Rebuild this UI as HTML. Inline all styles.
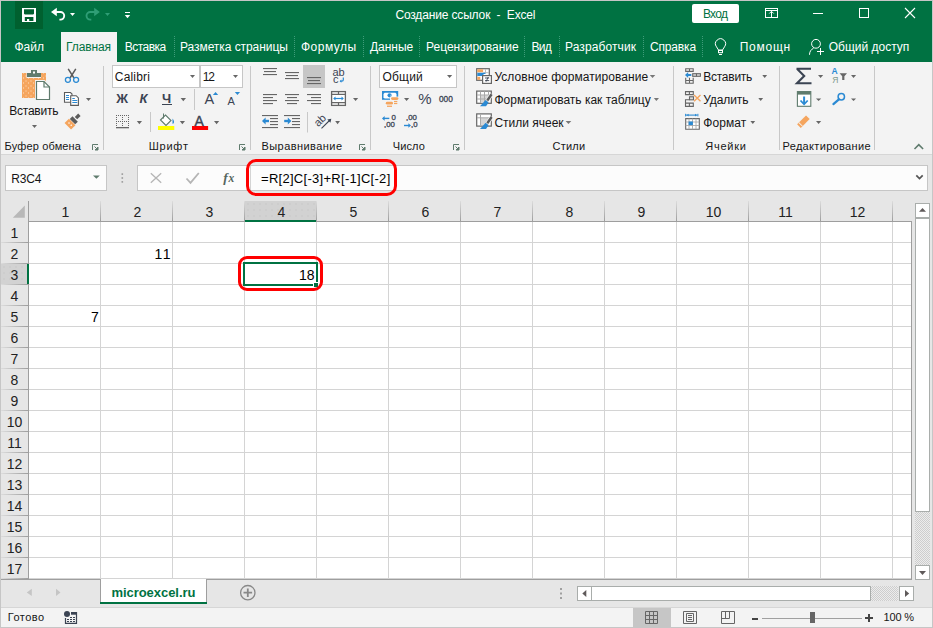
<!DOCTYPE html>
<html><head><meta charset="utf-8">
<style>
*{margin:0;padding:0;box-sizing:border-box}
html,body{width:933px;height:628px;overflow:hidden;background:#fff}
body{position:relative;font-family:"Liberation Sans",sans-serif;font-size:12px;color:#262626}
.a{position:absolute}
.t{position:absolute;white-space:nowrap}
svg{position:absolute;overflow:visible}
</style></head><body>
<div class="a" style="left:0px;top:0px;width:933px;height:628px;background:#c6c6c6;"></div>
<div class="a" style="left:1px;top:1px;width:931px;height:61px;background:#007242;"></div>
<div class="a" style="left:15px;top:1px;width:28px;height:28px;background:#00602f;"></div>
<div class="a" style="left:1px;top:62px;width:931px;height:92px;background:#f3f3f3;"></div>
<div class="a" style="left:1px;top:154px;width:931px;height:1px;background:#d6d6d6;"></div>
<div class="a" style="left:61px;top:32px;width:56px;height:30px;background:#f3f3f3;"></div>
<div class="a" style="left:1px;top:155px;width:931px;height:424px;background:#e6e6e6;"></div>
<div class="a" style="left:1px;top:579px;width:931px;height:28px;background:#e6e6e6;"></div>
<div class="a" style="left:1px;top:607px;width:931px;height:20px;background:#f3f3f3;"></div>
<div class="a" style="left:1px;top:607px;width:931px;height:1px;background:#d6d6d6;"></div>
<div class="a" style="left:692px;top:4px;width:47px;height:19px;background:#fff;border-radius:2px"></div>
<div class="a" style="left:174px;top:36px;width:1px;height:21px;background:transparent;border-left:1px dotted #3f9c7a"></div>
<div class="a" style="left:294px;top:36px;width:1px;height:21px;background:transparent;border-left:1px dotted #3f9c7a"></div>
<div class="a" style="left:363px;top:36px;width:1px;height:21px;background:transparent;border-left:1px dotted #3f9c7a"></div>
<div class="a" style="left:419px;top:36px;width:1px;height:21px;background:transparent;border-left:1px dotted #3f9c7a"></div>
<div class="a" style="left:524px;top:36px;width:1px;height:21px;background:transparent;border-left:1px dotted #3f9c7a"></div>
<div class="a" style="left:559px;top:36px;width:1px;height:21px;background:transparent;border-left:1px dotted #3f9c7a"></div>
<div class="a" style="left:643px;top:36px;width:1px;height:21px;background:transparent;border-left:1px dotted #3f9c7a"></div>
<div class="a" style="left:702px;top:36px;width:1px;height:21px;background:transparent;border-left:1px dotted #3f9c7a"></div>
<div class="a" style="left:103px;top:66px;width:1px;height:84px;background:#c8c8c8;"></div>
<div class="a" style="left:250px;top:66px;width:1px;height:84px;background:#c8c8c8;"></div>
<div class="a" style="left:370px;top:66px;width:1px;height:84px;background:#c8c8c8;"></div>
<div class="a" style="left:464px;top:66px;width:1px;height:84px;background:#c8c8c8;"></div>
<div class="a" style="left:673px;top:66px;width:1px;height:84px;background:#c8c8c8;"></div>
<div class="a" style="left:779px;top:66px;width:1px;height:84px;background:#c8c8c8;"></div>
<div class="a" style="left:874px;top:66px;width:1px;height:84px;background:#c8c8c8;"></div>
<div class="a" style="left:112px;top:65px;width:88px;height:23px;background:#fff;border:1px solid #c6c6c6"></div>
<div class="a" style="left:200px;top:65px;width:43px;height:23px;background:#fff;border:1px solid #c6c6c6"></div>
<div class="a" style="left:379px;top:65px;width:78px;height:23px;background:#fff;border:1px solid #c6c6c6"></div>
<div class="a" style="left:5px;top:165px;width:102px;height:26px;background:#fcfcfc;border:1px solid #c6c6c6"></div>
<div class="a" style="left:137px;top:165px;width:791px;height:26px;background:#fcfcfc;border:1px solid #c6c6c6"></div>
<div class="a" style="left:250px;top:166px;width:1px;height:24px;background:#d4d4d4;"></div>
<div class="a" style="left:29px;top:222px;width:882px;height:357px;background:#fff;"></div>
<div class="a" style="left:100px;top:222px;width:1px;height:357px;background:#d4d4d4;"></div>
<div class="a" style="left:172px;top:222px;width:1px;height:357px;background:#d4d4d4;"></div>
<div class="a" style="left:244px;top:222px;width:1px;height:357px;background:#d4d4d4;"></div>
<div class="a" style="left:316px;top:222px;width:1px;height:357px;background:#d4d4d4;"></div>
<div class="a" style="left:388px;top:222px;width:1px;height:357px;background:#d4d4d4;"></div>
<div class="a" style="left:460px;top:222px;width:1px;height:357px;background:#d4d4d4;"></div>
<div class="a" style="left:532px;top:222px;width:1px;height:357px;background:#d4d4d4;"></div>
<div class="a" style="left:604px;top:222px;width:1px;height:357px;background:#d4d4d4;"></div>
<div class="a" style="left:676px;top:222px;width:1px;height:357px;background:#d4d4d4;"></div>
<div class="a" style="left:748px;top:222px;width:1px;height:357px;background:#d4d4d4;"></div>
<div class="a" style="left:820px;top:222px;width:1px;height:357px;background:#d4d4d4;"></div>
<div class="a" style="left:892px;top:222px;width:1px;height:357px;background:#d4d4d4;"></div>
<div class="a" style="left:29px;top:242px;width:882px;height:1px;background:#d4d4d4;"></div>
<div class="a" style="left:29px;top:263px;width:882px;height:1px;background:#d4d4d4;"></div>
<div class="a" style="left:29px;top:284px;width:882px;height:1px;background:#d4d4d4;"></div>
<div class="a" style="left:29px;top:305px;width:882px;height:1px;background:#d4d4d4;"></div>
<div class="a" style="left:29px;top:326px;width:882px;height:1px;background:#d4d4d4;"></div>
<div class="a" style="left:29px;top:347px;width:882px;height:1px;background:#d4d4d4;"></div>
<div class="a" style="left:29px;top:368px;width:882px;height:1px;background:#d4d4d4;"></div>
<div class="a" style="left:29px;top:389px;width:882px;height:1px;background:#d4d4d4;"></div>
<div class="a" style="left:29px;top:410px;width:882px;height:1px;background:#d4d4d4;"></div>
<div class="a" style="left:29px;top:431px;width:882px;height:1px;background:#d4d4d4;"></div>
<div class="a" style="left:29px;top:452px;width:882px;height:1px;background:#d4d4d4;"></div>
<div class="a" style="left:29px;top:473px;width:882px;height:1px;background:#d4d4d4;"></div>
<div class="a" style="left:29px;top:494px;width:882px;height:1px;background:#d4d4d4;"></div>
<div class="a" style="left:29px;top:515px;width:882px;height:1px;background:#d4d4d4;"></div>
<div class="a" style="left:29px;top:536px;width:882px;height:1px;background:#d4d4d4;"></div>
<div class="a" style="left:29px;top:557px;width:882px;height:1px;background:#d4d4d4;"></div>
<div class="a" style="left:29px;top:578px;width:882px;height:1px;background:#d4d4d4;"></div>
<div class="a" style="left:1px;top:201px;width:931px;height:20px;background:#e6e6e6;"></div>
<div class="a" style="left:245px;top:201px;width:71px;height:20px;background:#d2d2d2;background-image:radial-gradient(#c6c6c6 0.6px,transparent 0.8px);background-size:6px 6px"></div>
<div class="a" style="left:1px;top:264px;width:27px;height:20px;background:#d2d2d2;background-image:radial-gradient(#c6c6c6 0.6px,transparent 0.8px);background-size:6px 6px"></div>
<div class="a" style="left:28px;top:201px;width:1px;height:20px;background:linear-gradient(#dcdcdc,#9e9e9e);"></div>
<div class="a" style="left:100px;top:201px;width:1px;height:20px;background:linear-gradient(#dcdcdc,#9e9e9e);"></div>
<div class="a" style="left:172px;top:201px;width:1px;height:20px;background:linear-gradient(#dcdcdc,#9e9e9e);"></div>
<div class="a" style="left:244px;top:201px;width:1px;height:20px;background:linear-gradient(#dcdcdc,#9e9e9e);"></div>
<div class="a" style="left:316px;top:201px;width:1px;height:20px;background:linear-gradient(#dcdcdc,#9e9e9e);"></div>
<div class="a" style="left:388px;top:201px;width:1px;height:20px;background:linear-gradient(#dcdcdc,#9e9e9e);"></div>
<div class="a" style="left:460px;top:201px;width:1px;height:20px;background:linear-gradient(#dcdcdc,#9e9e9e);"></div>
<div class="a" style="left:532px;top:201px;width:1px;height:20px;background:linear-gradient(#dcdcdc,#9e9e9e);"></div>
<div class="a" style="left:604px;top:201px;width:1px;height:20px;background:linear-gradient(#dcdcdc,#9e9e9e);"></div>
<div class="a" style="left:676px;top:201px;width:1px;height:20px;background:linear-gradient(#dcdcdc,#9e9e9e);"></div>
<div class="a" style="left:748px;top:201px;width:1px;height:20px;background:linear-gradient(#dcdcdc,#9e9e9e);"></div>
<div class="a" style="left:820px;top:201px;width:1px;height:20px;background:linear-gradient(#dcdcdc,#9e9e9e);"></div>
<div class="a" style="left:892px;top:201px;width:1px;height:20px;background:linear-gradient(#dcdcdc,#9e9e9e);"></div>
<div class="a" style="left:28px;top:221px;width:883px;height:1px;background:#9e9e9e;"></div>
<div class="a" style="left:28px;top:201px;width:1px;height:378px;background:#9e9e9e;"></div>
<div class="a" style="left:245px;top:220px;width:71px;height:2px;background:#007242;"></div>
<div class="a" style="left:27px;top:264px;width:2px;height:20px;background:#007242;"></div>
<div class="a" style="left:911px;top:221px;width:1px;height:358px;background:#9e9e9e;"></div>
<div class="a" style="left:1px;top:579px;width:911px;height:1px;background:#9e9e9e;"></div>
<div class="a" style="left:1px;top:242px;width:27px;height:1px;background:linear-gradient(90deg,#dcdcdc,#9e9e9e);"></div>
<div class="a" style="left:1px;top:263px;width:27px;height:1px;background:linear-gradient(90deg,#dcdcdc,#9e9e9e);"></div>
<div class="a" style="left:1px;top:284px;width:27px;height:1px;background:linear-gradient(90deg,#dcdcdc,#9e9e9e);"></div>
<div class="a" style="left:1px;top:305px;width:27px;height:1px;background:linear-gradient(90deg,#dcdcdc,#9e9e9e);"></div>
<div class="a" style="left:1px;top:326px;width:27px;height:1px;background:linear-gradient(90deg,#dcdcdc,#9e9e9e);"></div>
<div class="a" style="left:1px;top:347px;width:27px;height:1px;background:linear-gradient(90deg,#dcdcdc,#9e9e9e);"></div>
<div class="a" style="left:1px;top:368px;width:27px;height:1px;background:linear-gradient(90deg,#dcdcdc,#9e9e9e);"></div>
<div class="a" style="left:1px;top:389px;width:27px;height:1px;background:linear-gradient(90deg,#dcdcdc,#9e9e9e);"></div>
<div class="a" style="left:1px;top:410px;width:27px;height:1px;background:linear-gradient(90deg,#dcdcdc,#9e9e9e);"></div>
<div class="a" style="left:1px;top:431px;width:27px;height:1px;background:linear-gradient(90deg,#dcdcdc,#9e9e9e);"></div>
<div class="a" style="left:1px;top:452px;width:27px;height:1px;background:linear-gradient(90deg,#dcdcdc,#9e9e9e);"></div>
<div class="a" style="left:1px;top:473px;width:27px;height:1px;background:linear-gradient(90deg,#dcdcdc,#9e9e9e);"></div>
<div class="a" style="left:1px;top:494px;width:27px;height:1px;background:linear-gradient(90deg,#dcdcdc,#9e9e9e);"></div>
<div class="a" style="left:1px;top:515px;width:27px;height:1px;background:linear-gradient(90deg,#dcdcdc,#9e9e9e);"></div>
<div class="a" style="left:1px;top:536px;width:27px;height:1px;background:linear-gradient(90deg,#dcdcdc,#9e9e9e);"></div>
<div class="a" style="left:1px;top:557px;width:27px;height:1px;background:linear-gradient(90deg,#dcdcdc,#9e9e9e);"></div>
<div class="a" style="left:1px;top:578px;width:27px;height:1px;background:linear-gradient(90deg,#dcdcdc,#9e9e9e);"></div>
<div class="a" style="left:100px;top:579px;width:107px;height:24px;background:#fff;border-left:1px solid #9e9e9e;border-right:1px solid #9e9e9e"></div>
<div class="a" style="left:100px;top:602px;width:107px;height:2px;background:#007242;"></div>
<div class="a" style="left:577px;top:586px;width:15px;height:15px;background:#fff;border:1px solid #a9adab"></div>
<div class="a" style="left:591px;top:586px;width:280px;height:15px;background:#fff;border:1px solid #a9adab"></div>
<div class="a" style="left:871px;top:586px;width:27px;height:15px;background:#dcdcdc;background-image:repeating-conic-gradient(#cdcdcd 0 25%,#ececec 0 50%);background-size:2px 2px"></div>
<div class="a" style="left:899px;top:586px;width:15px;height:15px;background:#fff;border:1px solid #a9adab"></div>
<div class="a" style="left:915px;top:203px;width:15px;height:15px;background:#fff;border:1px solid #a9adab"></div>
<div class="a" style="left:915px;top:218px;width:15px;height:294px;background:#fff;border:1px solid #a9adab"></div>
<div class="a" style="left:915px;top:512px;width:15px;height:53px;background:#dcdcdc;background-image:repeating-conic-gradient(#cdcdcd 0 25%,#ececec 0 50%);background-size:2px 2px"></div>
<div class="a" style="left:915px;top:565px;width:15px;height:15px;background:#fff;border:1px solid #a9adab"></div>
<div class="a" style="left:633px;top:608px;width:38px;height:19px;background:#c6c6c6;"></div>
<div class="a" style="left:762px;top:618px;width:100px;height:1px;background:#a0a0a0;"></div>
<div class="a" style="left:810px;top:612px;width:5px;height:11px;background:#666;"></div>
<div class="a" style="left:752px;top:618px;width:6px;height:2px;background:#444;"></div>
<div class="a" style="left:865px;top:617px;width:8px;height:1.6px;background:#444;"></div>
<div class="a" style="left:868.2px;top:614px;width:1.6px;height:8px;background:#444;"></div>
<div class="t" style="left:395.40px;top:8px;font-size:12px;line-height:15px;font-weight:normal;color:#ffffff;letter-spacing:-0.154px;">Создание ссылок&nbsp; -&nbsp; Excel</div>
<div class="t" style="left:702.90px;top:7px;font-size:12px;line-height:15px;font-weight:normal;color:#007242;letter-spacing:-0.667px;">Вход</div>
<div class="t" style="left:14.40px;top:40px;font-size:12px;line-height:15px;font-weight:normal;color:#ffffff;letter-spacing:0.000px;">Файл</div>
<div class="t" style="left:66.00px;top:40px;font-size:12px;line-height:15px;font-weight:normal;color:#007242;letter-spacing:-0.100px;">Главная</div>
<div class="t" style="left:124.80px;top:40px;font-size:12px;line-height:15px;font-weight:normal;color:#ffffff;letter-spacing:-0.533px;">Вставка</div>
<div class="t" style="left:180.00px;top:40px;font-size:12px;line-height:15px;font-weight:normal;color:#ffffff;letter-spacing:-0.062px;">Разметка страницы</div>
<div class="t" style="left:301.00px;top:40px;font-size:12px;line-height:15px;font-weight:normal;color:#ffffff;letter-spacing:0.500px;">Формулы</div>
<div class="t" style="left:370.00px;top:40px;font-size:12px;line-height:15px;font-weight:normal;color:#ffffff;letter-spacing:-0.040px;">Данные</div>
<div class="t" style="left:426.00px;top:40px;font-size:12px;line-height:15px;font-weight:normal;color:#ffffff;letter-spacing:0.000px;">Рецензирование</div>
<div class="t" style="left:531.50px;top:40px;font-size:12px;line-height:15px;font-weight:normal;color:#ffffff;letter-spacing:-0.750px;">Вид</div>
<div class="t" style="left:565.00px;top:40px;font-size:12px;line-height:15px;font-weight:normal;color:#ffffff;letter-spacing:0.100px;">Разработчик</div>
<div class="t" style="left:650.00px;top:40px;font-size:12px;line-height:15px;font-weight:normal;color:#ffffff;letter-spacing:-0.167px;">Справка</div>
<div class="t" style="left:739.70px;top:40px;font-size:12px;line-height:15px;font-weight:normal;color:#ffffff;letter-spacing:0.760px;">Помощн</div>
<div class="t" style="left:828.70px;top:40px;font-size:12px;line-height:15px;font-weight:normal;color:#ffffff;letter-spacing:0.000px;">Общий доступ</div>
<div class="t" style="left:9.30px;top:104px;font-size:12px;line-height:15px;font-weight:normal;color:#161616;letter-spacing:-0.243px;">Вставить</div>
<div class="t" style="left:4.60px;top:139px;font-size:11px;line-height:14px;font-weight:normal;color:#161616;letter-spacing:0.145px;">Буфер обмена</div>
<div class="t" style="left:148.70px;top:139px;font-size:11px;line-height:14px;font-weight:normal;color:#161616;letter-spacing:0.775px;">Шрифт</div>
<div class="t" style="left:261.50px;top:139px;font-size:11px;line-height:14px;font-weight:normal;color:#161616;letter-spacing:0.436px;">Выравнивание</div>
<div class="t" style="left:392.70px;top:139px;font-size:11px;line-height:14px;font-weight:normal;color:#161616;letter-spacing:0.125px;">Число</div>
<div class="t" style="left:552.60px;top:139px;font-size:11px;line-height:14px;font-weight:normal;color:#161616;letter-spacing:0.200px;">Стили</div>
<div class="t" style="left:705.30px;top:139px;font-size:11px;line-height:14px;font-weight:normal;color:#161616;letter-spacing:0.760px;">Ячейки</div>
<div class="t" style="left:782.50px;top:139px;font-size:11px;line-height:14px;font-weight:normal;color:#161616;letter-spacing:0.323px;">Редактирование</div>
<div class="t" style="left:114.80px;top:70px;font-size:12px;line-height:15px;font-weight:normal;color:#161616;letter-spacing:0.183px;">Calibri</div>
<div class="t" style="left:202.80px;top:70px;font-size:12px;line-height:15px;font-weight:normal;color:#161616;letter-spacing:-1.200px;">12</div>
<div class="t" style="left:382.50px;top:70px;font-size:12px;line-height:15px;font-weight:normal;color:#161616;letter-spacing:0.200px;">Общий</div>
<div class="t" style="left:494.40px;top:70px;font-size:12px;line-height:15px;font-weight:normal;color:#161616;letter-spacing:0.050px;">Условное форматирование</div>
<div class="t" style="left:494.40px;top:93px;font-size:12px;line-height:15px;font-weight:normal;color:#161616;letter-spacing:0.008px;">Форматировать как таблицу</div>
<div class="t" style="left:494.40px;top:116px;font-size:12px;line-height:15px;font-weight:normal;color:#161616;letter-spacing:-0.010px;">Стили ячеек</div>
<div class="t" style="left:703.20px;top:70px;font-size:12px;line-height:15px;font-weight:normal;color:#161616;letter-spacing:-0.243px;">Вставить</div>
<div class="t" style="left:703.20px;top:93px;font-size:12px;line-height:15px;font-weight:normal;color:#161616;letter-spacing:-0.083px;">Удалить</div>
<div class="t" style="left:703.20px;top:116px;font-size:12px;line-height:15px;font-weight:normal;color:#161616;letter-spacing:0.100px;">Формат</div>
<div class="t" style="left:11.30px;top:172px;font-size:12px;line-height:15px;font-weight:normal;color:#161616;letter-spacing:-0.200px;">R3C4</div>
<div class="t" style="left:261.00px;top:171px;font-size:13px;line-height:16px;font-weight:normal;color:#000;letter-spacing:0.285px;">=R[2]C[-3]+R[-1]C[-2]</div>
<div class="t" style="left:7.70px;top:610px;font-size:11px;line-height:14px;font-weight:normal;color:#161616;letter-spacing:0.500px;">Готово</div>
<div class="t" style="left:883.50px;top:610px;font-size:11px;line-height:14px;font-weight:normal;color:#161616;letter-spacing:-0.150px;">100 %</div>
<div class="t" style="left:111.40px;top:585px;font-size:13px;line-height:16px;font-weight:bold;color:#007242;letter-spacing:-0.042px;">microexcel.ru</div>
<svg style="left:0;top:0" width="933" height="628" viewBox="0 0 933 628"><path fill="#fff" fill-rule="evenodd" d="M22,8h14v14h-14z M24,9.3h10v4.4l-0.9,0.8h-8.2l-0.9,-0.8z M24.8,17h8.6v3.9h-4.2v-1.8h-2.2v1.8h-2.2z"/><path d="M53,12h7.4a3.8,3.8 0 0 1 0,7.6h-1" fill="none" stroke="#fff" stroke-width="1.9"/><path d="M51,12l5.8,-4.2v8.4z" fill="#fff"/><path d="M70,13h5l-2.5,3z" fill="#fff"/><path d="M97.5,12h-7.2a3.8,3.8 0 0 0 0,7.6h1" fill="none" stroke="#2f9e76" stroke-width="1.9"/><path d="M99.8,12l-5.6,-4.2v8.4z" fill="#2f9e76"/><path d="M105,13h5l-2.5,3z" fill="#2f9e76"/><rect x="125" y="12" width="5" height="1" fill="#fff"/><path d="M124.8,15h5.4l-2.7,3.2z" fill="#fff"/><rect x="765.5" y="8.5" width="12" height="9" fill="none" stroke="#fff"/><path d="M766,10.5h11" stroke="#fff"/><path d="M771.5,11.5v6M769.3,13.5l2.2,-2.2l2.2,2.2" fill="none" stroke="#fff"/><rect x="813" y="13" width="10" height="1" fill="#fff"/><rect x="859.5" y="8.5" width="9" height="9" fill="none" stroke="#fff"/><path d="M905,8l10,10M915,8l-10,10" stroke="#fff" stroke-width="1.1"/><path d="M718.5,50l-2,-3.2a5,5 0 1 1 8,0l-2,3.2z" fill="none" stroke="#fff"/><rect x="718.5" y="50.5" width="4" height="2.2" fill="none" stroke="#fff"/><rect x="719" y="54" width="3" height="1" fill="#fff"/><circle cx="816" cy="43.8" r="4.4" fill="none" stroke="#fff"/><path d="M813.5,48.3c-2.5,1 -4,3.5 -4,6.5" fill="none" stroke="#fff"/><path d="M817,51.5h7M820.5,48v7" stroke="#fff"/><defs><pattern id="pd" width="5" height="5" patternUnits="userSpaceOnUse" x="0" y="0"><rect width="5" height="5" fill="#f5a55e"/><rect x="0.5" y="0.5" width="1" height="1" fill="#fde2c4"/><rect x="3" y="2.5" width="1" height="1" fill="#fde2c4"/></pattern></defs><path d="M22,73h4.5v5h14.5v-5h5v25h-24z" fill="url(#pd)"/><rect x="27" y="73" width="14" height="4" fill="#5f7b6d"/><rect x="31" y="70" width="6" height="3.5" fill="#5f7b6d"/><rect x="33" y="71.5" width="2" height="2" fill="#fff"/><path d="M36.5,81.5h7.5l5.5,5.5v12.5h-13z" fill="#fff" stroke="#f3f3f3" stroke-width="3"/><path d="M36.5,81.5h7.5l5.5,5.5v12.5h-13z" fill="#fff" stroke="#5f7b6d" stroke-width="1.2"/><path d="M44,81.5v5.5h5.5" fill="none" stroke="#5f7b6d" stroke-width="1.2"/><path d="M32,125h5l-2.5,3z" fill="#666"/><path d="M68.2,68.8l5.8,9.2M75.8,68.8l-5.8,9.2" stroke="#5b5b5b" stroke-width="1.5"/><circle cx="67.9" cy="79.8" r="2.5" fill="#f3f3f3" stroke="#2b8ad3" stroke-width="1.3"/><circle cx="76.1" cy="79.8" r="2.5" fill="#f3f3f3" stroke="#2b8ad3" stroke-width="1.3"/><path d="M64.5,92.5h6l1.5,1.5v8.3h-7.5z" fill="#fff" stroke="#5b5b5b" stroke-width="1.1"/><path d="M66,95.5h3M66,97.5h3M66,99.5h3" stroke="#2b8ad3" stroke-width="1"/><path d="M70.7,95.7h5.5l2.2,2.2v7.5h-7.7z" fill="#fff" stroke="#5b5b5b" stroke-width="1.1"/><path d="M72.3,98.5h2.5M72.3,100.5h5M72.3,102.5h5" stroke="#2b8ad3" stroke-width="1"/><path d="M86,98h5l-2.5,3z" fill="#666"/><g transform="translate(73.6,120.5) rotate(-45)"><rect x="3.4" y="-1.7" width="4.8" height="3.4" fill="#5b5b5b"/><rect x="-1.6" y="-3.8" width="3.8" height="7.6" fill="#5b5b5b"/><path d="M-8.2,-4.6h6.2v9.2h-6.2z" fill="#f5a55e"/><circle cx="-5" cy="-1.5" r="0.75" fill="#fff"/><circle cx="-5" cy="1.6" r="0.75" fill="#fff"/></g><path d="M190,75h5l-2.5,3z" fill="#666"/><path d="M233,75h5l-2.5,3z" fill="#666"/><path d="M180.6,98h5.4l-2.7,3.3z" fill="#666"/><path d="M136.8,121h5.2l-2.6,3.2z" fill="#666"/><path d="M179.8,121h5.2l-2.6,3.2z" fill="#666"/><path d="M214,121h5.2l-2.6,3.2z" fill="#666"/><rect x="194" y="89" width="1" height="21" fill="#c8c8c8"/><rect x="150" y="112" width="1" height="20" fill="#c8c8c8"/><path d="M212.9,95h5.3l-2.65,-3.1z" fill="#2b8ad3"/><path d="M234.8,91.9h5.3l-2.65,3.1z" fill="#2b8ad3"/><rect x="116" y="115" width="1" height="1" fill="#666"/><rect x="118" y="115" width="1" height="1" fill="#666"/><rect x="120" y="115" width="1" height="1" fill="#666"/><rect x="122" y="115" width="1" height="1" fill="#666"/><rect x="124" y="115" width="1" height="1" fill="#666"/><rect x="126" y="115" width="1" height="1" fill="#666"/><rect x="128" y="115" width="1" height="1" fill="#666"/><rect x="116" y="117" width="1" height="1" fill="#666"/><rect x="122" y="117" width="1" height="1" fill="#666"/><rect x="128" y="117" width="1" height="1" fill="#666"/><rect x="116" y="119" width="1" height="1" fill="#666"/><rect x="122" y="119" width="1" height="1" fill="#666"/><rect x="128" y="119" width="1" height="1" fill="#666"/><rect x="116" y="121" width="1" height="1" fill="#666"/><rect x="118" y="121" width="1" height="1" fill="#666"/><rect x="120" y="121" width="1" height="1" fill="#666"/><rect x="122" y="121" width="1" height="1" fill="#666"/><rect x="124" y="121" width="1" height="1" fill="#666"/><rect x="126" y="121" width="1" height="1" fill="#666"/><rect x="128" y="121" width="1" height="1" fill="#666"/><rect x="116" y="123" width="1" height="1" fill="#666"/><rect x="122" y="123" width="1" height="1" fill="#666"/><rect x="128" y="123" width="1" height="1" fill="#666"/><rect x="116" y="125" width="1" height="1" fill="#666"/><rect x="122" y="125" width="1" height="1" fill="#666"/><rect x="128" y="125" width="1" height="1" fill="#666"/><rect x="116" y="127" width="13" height="1.3" fill="#666"/><path d="M160.5,120l5,-5l5.5,5.5l-5,5z" fill="#fff" stroke="#5f7b6d" stroke-width="1.1"/><path d="M163.5,113.5v5" stroke="#5f7b6d" stroke-width="1"/><path d="M172.5,118.5c1,1.3 1.5,2.5 1.5,3.5c0,1 -0.6,1.8 -1.5,1.8z" fill="#2b8ad3"/><rect x="158" y="126" width="16.3" height="4" fill="#ffff00"/><rect x="192" y="126" width="16.1" height="4" fill="#ff0000"/><rect x="303" y="65" width="22" height="23" fill="#c6c6c6"/><rect x="263" y="68" width="14" height="1.1" fill="#666"/><rect x="264" y="71" width="12" height="1.1" fill="#666"/><rect x="263" y="74" width="14" height="1.1" fill="#666"/><rect x="285" y="72" width="14" height="1.1" fill="#666"/><rect x="286" y="75" width="12" height="1.1" fill="#666"/><rect x="285" y="78" width="14" height="1.1" fill="#666"/><rect x="307" y="77" width="14" height="1.1" fill="#666"/><rect x="308" y="80" width="12" height="1.1" fill="#666"/><rect x="307" y="83" width="14" height="1.1" fill="#666"/><rect x="263" y="94" width="14" height="1.1" fill="#666"/><rect x="263" y="97" width="10" height="1.1" fill="#666"/><rect x="263" y="100" width="14" height="1.1" fill="#666"/><rect x="263" y="103" width="10" height="1.1" fill="#666"/><rect x="285" y="94" width="14" height="1.1" fill="#666"/><rect x="287" y="97" width="10" height="1.1" fill="#666"/><rect x="285" y="100" width="14" height="1.1" fill="#666"/><rect x="287" y="103" width="10" height="1.1" fill="#666"/><rect x="307" y="94" width="14" height="1.1" fill="#666"/><rect x="311" y="97" width="10" height="1.1" fill="#666"/><rect x="307" y="100" width="14" height="1.1" fill="#666"/><rect x="311" y="103" width="10" height="1.1" fill="#666"/><rect x="331.6" y="91.6" width="13.8" height="13.8" fill="#fff" stroke="#666" stroke-width="1.3"/><path d="M332,94.3h13M332,102.7h13M338.5,92v2.3M338.5,102.7v2.3" stroke="#666" stroke-width="1.2"/><path d="M334,98.5h9" stroke="#2b8ad3" stroke-width="1.2"/><path d="M333.2,98.5l2.3,-2v4z M343.8,98.5l-2.3,-2v4z" fill="#2b8ad3"/><path d="M353,98h5.2l-2.6,3z" fill="#666"/><path d="M343.3,77.5v2.3c0,1 -0.5,1.4 -1.4,1.4h-1.5" fill="none" stroke="#2b8ad3" stroke-width="1.2"/><path d="M339.6,81.2l1.8,-1.6v3.2z" fill="#2b8ad3"/><rect x="262" y="115" width="16" height="1.1" fill="#666"/><rect x="270" y="118" width="8" height="1.1" fill="#666"/><rect x="270" y="121" width="8" height="1.1" fill="#666"/><rect x="270" y="124" width="8" height="1.1" fill="#666"/><rect x="262" y="127" width="16" height="1.1" fill="#666"/><rect x="284" y="115" width="16" height="1.1" fill="#666"/><rect x="292" y="118" width="8" height="1.1" fill="#666"/><rect x="292" y="121" width="8" height="1.1" fill="#666"/><rect x="292" y="124" width="8" height="1.1" fill="#666"/><rect x="284" y="127" width="16" height="1.1" fill="#666"/><path d="M264,121h5" stroke="#2b8ad3" stroke-width="2.4"/><path d="M262,121l3.6,-3.4v6.8z" fill="#2b8ad3"/><path d="M284.2,121h5" stroke="#2b8ad3" stroke-width="2.4"/><path d="M291.4,121l-3.6,-3.4v6.8z" fill="#2b8ad3"/><rect x="307" y="112" width="1" height="20.5" fill="#c8c8c8"/><path d="M321.5,128.3l9,-8.8" stroke="#3b4453" stroke-width="1.1"/><path d="M331.3,118.7l-4,0.9l3.1,3.1z" fill="#3b4453"/><path d="M335.2,121h4.8l-2.4,3.2z" fill="#666"/><path d="M447,75h5.2l-2.6,3z" fill="#666"/><path d="M404,98h5.2l-2.6,3z" fill="#666"/><rect x="382" y="91" width="16.2" height="8.8" fill="#2b8ad3"/><path d="M384.6,92.7h10.8l1.1,1.3v3.2l-1.1,1.3h-10.8l-1.1,-1.3v-3.2z" fill="#fff"/><circle cx="389.6" cy="95.3" r="2.1" fill="#2b8ad3"/><path d="M390.5,95.3h1" stroke="#fff" stroke-width="0.8"/><rect x="390" y="96.6" width="9" height="8" fill="#f3f3f3"/><rect x="384.8" y="101.2" width="9" height="6.8" fill="#f3f3f3"/><rect x="391" y="97.2" width="7.4" height="2.8" rx="1.4" fill="#f5a55e"/><rect x="394" y="100.9" width="3.3" height="1.2" fill="#f5a55e"/><rect x="394" y="102.9" width="3.3" height="1.2" fill="#f5a55e"/><rect x="385.8" y="101.8" width="7.2" height="2.8" rx="1.4" fill="#f5a55e"/><rect x="387" y="105.6" width="5" height="1.3" fill="#f5a55e"/><path d="M383.5,118.4h5.8" stroke="#2b8ad3" stroke-width="1.4"/><path d="M382,118.4l2.6,-2.3v4.6z" fill="#2b8ad3"/><path d="M404,125.5h5.5" stroke="#2b8ad3" stroke-width="1.4"/><path d="M411,125.5l-2.6,-2.3v4.6z" fill="#2b8ad3"/><rect x="476.7" y="68.7" width="12.6" height="11.6" fill="#fff" stroke="#666" stroke-width="1.2"/><rect x="477.3" y="69.3" width="5.8" height="3" fill="#f5a55e"/><path d="M483.3,72.7h5.6M485.5,69.3v3.3" stroke="#b5b5b5" stroke-width="0.9"/><path d="M477.3,72.8h8.2v1.3h-2v2h-6.2z" fill="#2b8ad3"/><rect x="477.3" y="76.8" width="3" height="3" fill="#f5a55e"/><rect x="482.6" y="75.6" width="8.8" height="7.8" fill="#fff" stroke="#666" stroke-width="1.2"/><path d="M485,78h4.2M485,80.6h4.2M488.3,77l-2.2,4.6" stroke="#3b4453" stroke-width="0.9"/><rect x="476.7" y="91.1" width="14.6" height="12.2" fill="#fff" stroke="#666" stroke-width="1.2"/><rect x="480.5" y="95.1" width="8" height="7" fill="#d5d5d5"/><path d="M480.5,91.5v11.5M484.5,91.5v11.5M488.5,91.5v8M477,95.0h13M477,99.0h11" stroke="#a9a9a9" stroke-width="1"/><path d="M491.8,94.0l-4.6,6.8" stroke="#f3f3f3" stroke-width="4"/><path d="M491.6,94.2l-4.3,6.3" stroke="#5b5b5b" stroke-width="2.4"/><path d="M480,106.3l5.6,-6.4l3,2.6l-2.6,3.8z" fill="#2b8ad3"/><rect x="476.7" y="113.89999999999999" width="14.6" height="12.2" fill="#fff" stroke="#666" stroke-width="1.2"/><rect x="480.5" y="117.89999999999999" width="8" height="7" fill="#d5d5d5"/><path d="M480.5,114.3v11.5M477,117.8h13" stroke="#a9a9a9" stroke-width="1"/><path d="M491.8,116.8l-4.6,6.8" stroke="#f3f3f3" stroke-width="4"/><path d="M491.6,117.0l-4.3,6.3" stroke="#5b5b5b" stroke-width="2.4"/><path d="M480,129.1l5.6,-6.4l3,2.6l-2.6,3.8z" fill="#2b8ad3"/><path d="M649.8,75h5.5l-2.75,3z" fill="#777"/><path d="M653.8,98h5.2l-2.6,3z" fill="#777"/><path d="M565.6,121h5.7l-2.85,3z" fill="#777"/><path d="M685.7,68.8h7.5v2.6h-7.5zM689.5,68.8v2.6" fill="none" stroke="#666" stroke-width="1.1"/><path d="M685.7,77.8v5.4h7.5v-5.4M685.7,80.5h7.5M689.5,77.8v5.4" fill="none" stroke="#666" stroke-width="1.1"/><rect x="692.7" y="73.7" width="7.7" height="2.6" fill="#ddd" stroke="#666" stroke-width="1.1"/><path d="M696.5,73.7v2.6" stroke="#666" stroke-width="1.1"/><path d="M686.8,75h4.5" stroke="#2b8ad3" stroke-width="2"/><path d="M685,75l3.2,-3v6z" fill="#2b8ad3"/><path d="M762.3,75h4.8l-2.4,3z" fill="#666"/><path d="M685.5,91.6h7.8v3h-7.8zM689.4,91.6v3" fill="none" stroke="#666" stroke-width="1.1"/><rect x="689.5" y="96.8" width="4" height="3" fill="#ddd" stroke="#666" stroke-width="1.1"/><path d="M689.5,99.8h-4v6.6h7.8v-3.3h-7.8M689.4,103.1v3.3" fill="none" stroke="#666" stroke-width="1.1"/><path d="M694,95l6.5,6.2M700.5,95l-6.5,6.2" stroke="#f5a55e" stroke-width="1.4"/><path d="M758.3,98h4.8l-2.4,3z" fill="#666"/><path d="M686,115.1h11.5" stroke="#2b8ad3" stroke-width="1.1"/><path d="M685.6,113.8v2.6M697.9,113.8v2.6" stroke="#2b8ad3" stroke-width="1"/><path d="M686.8,115.1l1.8,-1.4v2.8zM696.8,115.1l-1.8,-1.4v2.8z" fill="#2b8ad3"/><path d="M685.7,118.6h13.6v10.6h-13.6z" fill="#fff" stroke="#666" stroke-width="1.1"/><path d="M689,118.6v10.6M692.5,118.6v10.6M696,118.6v10.6M685.7,122h13.6M685.7,125.5h13.6" stroke="#aaa" stroke-width="0.9"/><rect x="688.6" y="121.5" width="4.3" height="3.6" fill="#2b8ad3"/><path d="M750.4,121h4.8l-2.4,3z" fill="#666"/><path d="M796.5,68.8h14.5M797,68.8l7.2,7.2l-7.2,7.2h14.5" fill="none" stroke="#3b4453" stroke-width="2.1" stroke-linejoin="miter"/><path d="M818,75h5.2l-2.6,3z" fill="#666"/><path d="M851,75h5.1l-2.55,3z" fill="#666"/><path d="M816,98.4h5.2l-2.6,2.6z" fill="#666"/><path d="M851,98.4h5.1l-2.55,2.6z" fill="#666"/><path d="M816,121h5.2l-2.6,3z" fill="#666"/><path d="M839.6,73.2h7.4l-2.6,3v3.8h-2.2v-3.8z" fill="#666"/><rect x="797.4" y="91.6" width="13.4" height="14.7" fill="#fff" stroke="#5f7b6d" stroke-width="1.1"/><rect x="797.4" y="91.6" width="13.4" height="3" fill="#5f7b6d"/><path d="M804.1,96.5v6.5" stroke="#2b8ad3" stroke-width="2"/><path d="M800.5,100.5l3.6,3.8l3.6,-3.8" fill="none" stroke="#2b8ad3" stroke-width="1.8"/><circle cx="841.3" cy="96.8" r="3.2" fill="none" stroke="#2b8ad3" stroke-width="1.5"/><path d="M838.9,99.3l-5.5,4.8" stroke="#2b8ad3" stroke-width="2.2" stroke-linecap="round"/><g transform="translate(803.4,121.7) rotate(-45)"><rect x="-6.3" y="-2.6" width="12.6" height="5.2" fill="#f5a55e"/><rect x="-4.3" y="-2.6" width="0.9" height="5.2" fill="#f3f3f3"/></g><path d="M914.5,149l4.3,-4.3l4.3,4.3" fill="none" stroke="#5f7b6d" stroke-width="1.6"/><path d="M92.5,150v-5.5h5.5" fill="none" stroke="#5f7b6d" stroke-width="1"/><path d="M94.5,146.5l3.5,3.5M95,150h3v-3z" stroke="#5f7b6d" stroke-width="1" fill="#5f7b6d"/><path d="M239.5,150v-5.5h5.5" fill="none" stroke="#5f7b6d" stroke-width="1"/><path d="M241.5,146.5l3.5,3.5M242,150h3v-3z" stroke="#5f7b6d" stroke-width="1" fill="#5f7b6d"/><path d="M359.5,150v-5.5h5.5" fill="none" stroke="#5f7b6d" stroke-width="1"/><path d="M361.5,146.5l3.5,3.5M362,150h3v-3z" stroke="#5f7b6d" stroke-width="1" fill="#5f7b6d"/><path d="M453.5,150v-5.5h5.5" fill="none" stroke="#5f7b6d" stroke-width="1"/><path d="M455.5,146.5l3.5,3.5M456,150h3v-3z" stroke="#5f7b6d" stroke-width="1" fill="#5f7b6d"/><path d="M93,175.5h6.8l-3.4,3.3z" fill="#5f7b6d"/><rect x="121.5" y="173.3" width="1.6" height="1.6" fill="#9a9a9a"/><rect x="121.5" y="177.2" width="1.6" height="1.6" fill="#9a9a9a"/><rect x="121.5" y="181.1" width="1.6" height="1.6" fill="#9a9a9a"/><path d="M150.8,173.3l10.4,9.4M161.2,173.3l-10.4,9.4" stroke="#b5b5b5" stroke-width="1.3"/><path d="M186.5,178.5l4,4.3l8.3,-9.8" fill="none" stroke="#b5b5b5" stroke-width="1.8"/><path d="M12.8,217.8l12,-12.3v12.3z" fill="#b8b8b8"/><path d="M31.8,588.8v7.2l-5,-3.6z" fill="#c5c5c5"/><path d="M56,588.8v7.2l4.5,-3.6z" fill="#c5c5c5"/><circle cx="247.8" cy="592.7" r="7.2" fill="none" stroke="#888" stroke-width="1.3"/><path d="M243.5,592.7h8.6M247.8,588.4v8.6" stroke="#888" stroke-width="1.8"/><rect x="560" y="588" width="2" height="2" fill="#a0a0a0"/><rect x="560" y="592.5" width="2" height="2" fill="#a0a0a0"/><rect x="560" y="597" width="2" height="2" fill="#a0a0a0"/><circle cx="67" cy="613.9" r="3" fill="#3b4453"/><rect x="71" y="612" width="6" height="2.7" fill="#3b4453"/><path d="M76.5,612v11.4h-11v-5.5" fill="none" stroke="#3b4453" stroke-width="1.2"/><path d="M70,617.5h2M73,617.5h2M67,619.5h2M70,619.5h2M73,619.5h2M67,621.5h2M70,621.5h2M73,621.5h2" stroke="#3b4453" stroke-width="1.1"/><path d="M919,211.8h7l-3.5,-3.8z" fill="#5f5a5a"/><path d="M919,571h7l-3.5,4z" fill="#5f5a5a"/><path d="M586.3,590v7l-4,-3.5z" fill="#5f5a5a"/><path d="M905,590v7l4.2,-3.5z" fill="#5f5a5a"/><path d="M645.5,611.5h12v12h-12z M649.5,611.5v12 M653.5,611.5v12 M645.5,615.5h12 M645.5,619.5h12" fill="none" stroke="#666" stroke-width="1"/><path d="M683.5,611.5h13v12h-13z M686.5,613.5h7v8h-7z M688,615.5h4 M688,617.5h4 M688,619.5h4" fill="none" stroke="#666" stroke-width="1"/><path d="M721.5,611.5h13v12h-13z M725.5,611.5v7 M729.5,611.5v7 M721.5,618.5h8" fill="none" stroke="#666" stroke-width="1"/><path d="M916.3,175.3l3.2,3.3l3.2,-3.3" fill="none" stroke="#555" stroke-width="1.7"/></svg>
<div class="t" style="left:-84.50px;width:300px;text-align:center;top:203px;font-size:14px;line-height:18px;color:#222">1</div>
<div class="t" style="left:-12.50px;width:300px;text-align:center;top:203px;font-size:14px;line-height:18px;color:#222">2</div>
<div class="t" style="left:59.50px;width:300px;text-align:center;top:203px;font-size:14px;line-height:18px;color:#222">3</div>
<div class="t" style="left:131.50px;width:300px;text-align:center;top:203px;font-size:14px;line-height:18px;color:#222">4</div>
<div class="t" style="left:203.50px;width:300px;text-align:center;top:203px;font-size:14px;line-height:18px;color:#222">5</div>
<div class="t" style="left:275.50px;width:300px;text-align:center;top:203px;font-size:14px;line-height:18px;color:#222">6</div>
<div class="t" style="left:347.50px;width:300px;text-align:center;top:203px;font-size:14px;line-height:18px;color:#222">7</div>
<div class="t" style="left:419.50px;width:300px;text-align:center;top:203px;font-size:14px;line-height:18px;color:#222">8</div>
<div class="t" style="left:491.50px;width:300px;text-align:center;top:203px;font-size:14px;line-height:18px;color:#222">9</div>
<div class="t" style="left:563.50px;width:300px;text-align:center;top:203px;font-size:14px;line-height:18px;color:#222">10</div>
<div class="t" style="left:635.50px;width:300px;text-align:center;top:203px;font-size:14px;line-height:18px;color:#222">11</div>
<div class="t" style="left:707.50px;width:300px;text-align:center;top:203px;font-size:14px;line-height:18px;color:#222">12</div>
<div class="t" style="left:-135.50px;width:300px;text-align:center;top:224px;font-size:14px;line-height:18px;color:#222">1</div>
<div class="t" style="left:-135.50px;width:300px;text-align:center;top:245px;font-size:14px;line-height:18px;color:#222">2</div>
<div class="t" style="left:-135.50px;width:300px;text-align:center;top:266px;font-size:14px;line-height:18px;color:#222">3</div>
<div class="t" style="left:-135.50px;width:300px;text-align:center;top:287px;font-size:14px;line-height:18px;color:#222">4</div>
<div class="t" style="left:-135.50px;width:300px;text-align:center;top:308px;font-size:14px;line-height:18px;color:#222">5</div>
<div class="t" style="left:-135.50px;width:300px;text-align:center;top:329px;font-size:14px;line-height:18px;color:#222">6</div>
<div class="t" style="left:-135.50px;width:300px;text-align:center;top:350px;font-size:14px;line-height:18px;color:#222">7</div>
<div class="t" style="left:-135.50px;width:300px;text-align:center;top:371px;font-size:14px;line-height:18px;color:#222">8</div>
<div class="t" style="left:-135.50px;width:300px;text-align:center;top:392px;font-size:14px;line-height:18px;color:#222">9</div>
<div class="t" style="left:-135.50px;width:300px;text-align:center;top:413px;font-size:14px;line-height:18px;color:#222">10</div>
<div class="t" style="left:-135.50px;width:300px;text-align:center;top:434px;font-size:14px;line-height:18px;color:#222">11</div>
<div class="t" style="left:-135.50px;width:300px;text-align:center;top:455px;font-size:14px;line-height:18px;color:#222">12</div>
<div class="t" style="left:-135.50px;width:300px;text-align:center;top:476px;font-size:14px;line-height:18px;color:#222">13</div>
<div class="t" style="left:-135.50px;width:300px;text-align:center;top:497px;font-size:14px;line-height:18px;color:#222">14</div>
<div class="t" style="left:-135.50px;width:300px;text-align:center;top:518px;font-size:14px;line-height:18px;color:#222">15</div>
<div class="t" style="left:-135.50px;width:300px;text-align:center;top:539px;font-size:14px;line-height:18px;color:#222">16</div>
<div class="t" style="left:-135.50px;width:300px;text-align:center;top:560px;font-size:14px;line-height:18px;color:#222">17</div>
<div class="t" style="left:-127.90px;width:300px;text-align:right;top:245px;font-size:14px;line-height:18px;color:#000"><span style="letter-spacing:1.6px">11</span></div>
<div class="t" style="left:14.50px;width:300px;text-align:right;top:266px;font-size:14px;line-height:18px;color:#000">18</div>
<div class="t" style="left:-201.20px;width:300px;text-align:right;top:308px;font-size:14px;line-height:18px;color:#000">7</div>
<div class="a" style="left:243px;top:262px;width:75px;height:24px;background:transparent;border:2px solid #007242"></div>
<div class="a" style="left:313px;top:282px;width:6px;height:6px;background:#007242;border:1px solid #fff"></div>
<div class="t" style="left:116.2px;top:91.5px;font-size:13px;line-height:13px;font-weight:bold;font-style:normal;color:#3b4453;">Ж</div>
<div class="t" style="left:139.5px;top:91.5px;font-size:13px;line-height:13px;font-weight:bold;font-style:italic;color:#3b4453;">К</div>
<div class="t" style="left:162px;top:91.5px;font-size:13px;line-height:13px;font-weight:bold;font-style:normal;color:#3b4453;">Ч</div>
<div class="a" style="left:162px;top:104px;width:10px;height:1.2px;background:#3b4453;"></div>
<div class="t" style="left:204.6px;top:92.3px;font-size:14.5px;line-height:14.5px;font-weight:normal;font-style:normal;color:#3b4453;">A</div>
<div class="t" style="left:227.5px;top:95.5px;font-size:11px;line-height:11px;font-weight:normal;font-style:normal;color:#3b4453;">A</div>
<div class="t" style="left:194.5px;top:114px;font-size:14px;line-height:14px;font-weight:normal;font-style:normal;color:#3b4453;-webkit-text-stroke:0.4px #3b4453">A</div>
<div class="t" style="left:332.5px;top:66.5px;font-size:11px;line-height:11px;font-weight:normal;font-style:normal;color:#3b4453;">ab</div>
<div class="t" style="left:333px;top:74px;font-size:11px;line-height:11px;font-weight:normal;font-style:normal;color:#3b4453;">c</div>
<div class="t" style="left:418.2px;top:91.3px;font-size:15px;line-height:15px;font-weight:normal;font-style:normal;color:#3b4453;">%</div>
<div class="t" style="left:438.6px;top:95.2px;font-size:9.2px;line-height:9.2px;font-weight:normal;font-style:normal;color:#3b4453;transform:scaleX(0.9);transform-origin:left;-webkit-text-stroke:0.35px #3b4453">000</div>
<div class="t" style="left:391.6px;top:114.2px;font-size:7.8px;line-height:7.8px;font-weight:normal;font-style:normal;color:#3b4453;-webkit-text-stroke:0.3px #3b4453">0</div>
<div class="t" style="left:384px;top:121.2px;font-size:7.8px;line-height:7.8px;font-weight:normal;font-style:normal;color:#3b4453;-webkit-text-stroke:0.3px #3b4453">,00</div>
<div class="t" style="left:406px;top:114.2px;font-size:7.8px;line-height:7.8px;font-weight:normal;font-style:normal;color:#3b4453;-webkit-text-stroke:0.3px #3b4453">,00</div>
<div class="t" style="left:411px;top:121.2px;font-size:7.8px;line-height:7.8px;font-weight:normal;font-style:normal;color:#3b4453;-webkit-text-stroke:0.3px #3b4453">,0</div>
<div class="t" style="left:831.5px;top:66.5px;font-size:8.5px;line-height:8.5px;font-weight:bold;font-style:normal;color:#2b8ad3;">А</div>
<div class="t" style="left:223.3px;top:171px;font-size:13.5px;line-height:13.5px;font-weight:bold;font-style:italic;color:#56675f;font-family:'Liberation Serif'">f<span style="font-size:11.5px;margin-left:0.6px">x</span></div>
<div class="t" style="left:832.3px;top:75.8px;font-size:8.5px;line-height:8.5px;font-weight:normal;font-style:normal;color:#7f9a8c;">Я</div>
<div class="t" style="left:314px;top:114.5px;font-size:11px;line-height:11px;color:#3b4453;transform:rotate(-45deg);transform-origin:50% 50%;">ab</div>
<div class="a" style="left:246px;top:159px;width:151px;height:37px;background:transparent;border:3px solid #ff0000;border-radius:10px"></div>
<div class="a" style="left:238px;top:256px;width:85px;height:35px;background:transparent;border:3px solid #ff0000;border-radius:9px"></div>
</body></html>
